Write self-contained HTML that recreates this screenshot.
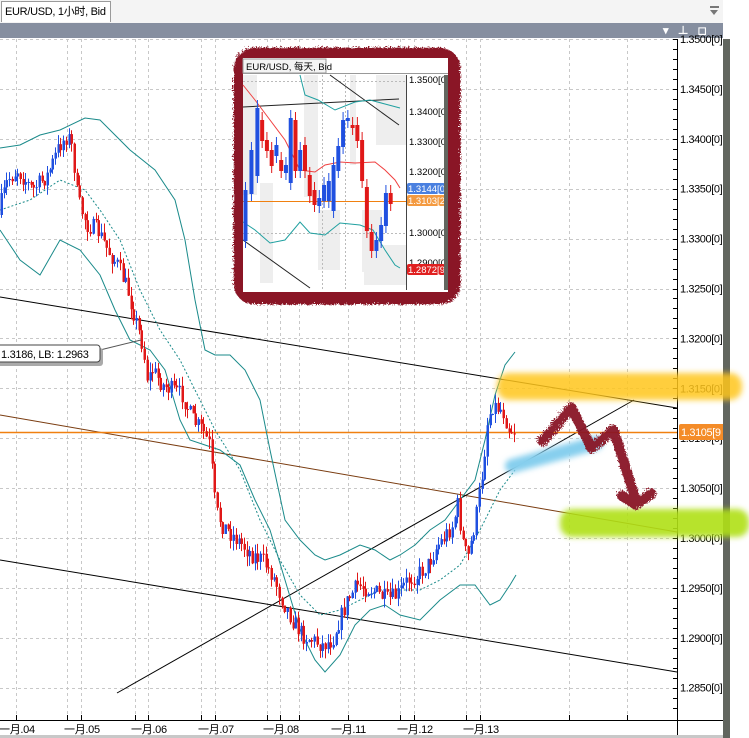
<!DOCTYPE html>
<html><head><meta charset="utf-8"><style>
body{margin:0;width:749px;height:738px;overflow:hidden;background:#fff;font-family:"Liberation Sans","Noto Sans CJK SC",sans-serif;position:relative}
#top{position:absolute;left:0;top:0;width:723px;height:23px;background:#f4f4f4;border-bottom:1px solid #a0a0a0}
#tab{position:absolute;left:1px;top:1px;width:110px;height:21px;background:#fff;border:1px solid #9a9a9a;border-bottom:none;font-size:11px;line-height:21px;padding-left:3px;box-sizing:border-box;letter-spacing:-0.3px}
#title{position:absolute;left:0;top:23px;width:723px;height:15px;background:#868fa0}
#frame{position:absolute;left:723px;top:0;width:7px;height:738px;background:linear-gradient(90deg,#b8b4a8,#6c7068 40%,#5a5e58 70%,#a9a9a0)}
svg{position:absolute;left:0;top:0}
</style></head><body>
<div id="top"><div id="tab">EUR/USD, 1小时, Bid</div>
<div style="position:absolute;left:710px;top:6px;width:9px;height:2px;background:#777"></div>
<div style="position:absolute;left:710px;top:10px;width:0;height:0;border-left:4.5px solid transparent;border-right:4.5px solid transparent;border-top:5px solid #777"></div></div>
<div id="title"><span style="position:absolute;left:663px;top:-1px;color:#fff;font-size:11px;font-weight:bold;letter-spacing:3px">▾ ⊥ ◻ ✕</span></div>
<div id="frame"></div>
<svg width="749" height="738" viewBox="0 0 749 738" style="top:0">
<defs>
<filter id="blur" x="-20%" y="-50%" width="140%" height="200%"><feGaussianBlur stdDeviation="3"/></filter>
<filter id="rough"><feTurbulence baseFrequency="0.5" numOctaves="2" result="t"/><feDisplacementMap in="SourceGraphic" in2="t" scale="6"/></filter>
<clipPath id="cc"><rect x="0" y="39" width="677" height="681"/></clipPath>
</defs>
<g id="grid" stroke="#c8c8c8" stroke-dasharray="3,3" stroke-width="1"></g>
<g id="lines" clip-path="url(#cc)"></g>
<g id="candles" clip-path="url(#cc)"></g>
<g id="axis"></g>
</svg>
<script>
const NS="http://www.w3.org/2000/svg";
function el(p,t,a){const e=document.createElementNS(NS,t);for(const k in a)e.setAttribute(k,a[k]);p.appendChild(e);return e}
const svg=document.querySelector('svg');
const grid=document.getElementById('grid'),lines=document.getElementById('lines'),cg=document.getElementById('candles'),ax=document.getElementById('axis');
const vx=[16,67,81,135,148,201,215,267,280,299,348,400,414,466,480,569,627];
vx.forEach(x=>el(grid,'line',{x1:x+.5,y1:39,x2:x+.5,y2:720}));
for(let k=0;k<14;k++){const y=Math.round(39+49.9*k)+.5;el(grid,'line',{x1:0,y1:y,x2:677,y2:y});}
el(ax,'rect',{x:0,y:720,width:723,height:18,fill:'#fff'});
el(ax,'line',{x1:0,y1:720.5,x2:723,y2:720.5,stroke:'#000'});
el(ax,'line',{x1:677.5,y1:39,x2:677.5,y2:735,stroke:'#000'});
el(ax,'rect',{x:0,y:735,width:723,height:3,fill:'#c8c8c8'});
vx.forEach(x=>el(ax,'line',{x1:x+.5,y1:715,x2:x+.5,y2:720,stroke:'#000'}));
const dl=[[16,'.04'],[81,'.05'],[148,'.06'],[215,'.07'],[280,'.08'],[348,'.11'],[414,'.12'],[480,'.13']];
dl.forEach(([x,s])=>{const t=el(ax,'text',{x:x-17,y:733,'font-size':'11',fill:'#000','letter-spacing':'-0.3'});t.textContent='一月'+s;});
for(let k=0;k<68;k++){const y=Math.round(39+9.98*k)+.5;el(ax,'line',{x1:673,y1:y,x2:677,y2:y,stroke:'#000'});}
const pl=['1.3500','1.3450','1.3400','1.3350','1.3300','1.3250','1.3200','1.3150','1.3100','1.3050','1.3000','1.2950','1.2900','1.2850'];
pl.forEach((s,k)=>{const y=39+49.9*k;const t=el(ax,'text',{x:680,y:y+4,'font-size':'11',fill:'#000','letter-spacing':'-0.4'});t.textContent=s+'[0]';});
el(ax,'rect',{x:723,y:0,width:26,height:738,fill:'#fff'});
function poly(pts,a){el(lines,'polyline',Object.assign({points:pts.map(p=>p.join(',')).join(' '),fill:'none'},a));}
poly([[0,297],[677,408]],{stroke:'#000','stroke-width':1});
poly([[0,560],[677,672]],{stroke:'#000','stroke-width':1});
poly([[0,415],[677,532]],{stroke:'#7a3c10','stroke-width':1});
poly([[117,693],[634,400]],{stroke:'#000','stroke-width':1});
el(lines,'line',{x1:0,y1:432.5,x2:677,y2:432.5,stroke:'#f08010','stroke-width':1.5});
const up=[[0,148],[20,145],[40,135],[60,130],[85,118],[100,120],[110,130],[130,150],[155,170],[175,200],[185,240],[195,300],[205,350],[215,355],[230,355],[245,370],[260,400],[270,450],[285,520],[300,540],[315,555],[325,560],[340,555],[360,545],[375,550],[390,560],[400,555],[415,545],[430,530],[445,520],[460,500],[475,480],[485,440],[495,395],[505,365],[515,352]];
const lo=[[0,230],[20,260],[40,275],[60,240],[80,250],[100,275],[115,310],[130,340],[150,350],[165,370],[180,420],[190,440],[205,445],[220,450],[240,465],[255,500],[270,530],[285,580],[300,630],[315,660],[325,672],[340,655],[355,625],[370,610],[385,605],[400,615],[420,620],[440,600],[460,585],[475,585],[490,605],[500,600],[510,585],[516,575]];
const mid=[[0,210],[30,200],[60,180],[85,190],[100,210],[120,240],[140,290],[160,330],[180,360],[200,400],[215,430],[240,470],[260,520],[280,560],[300,595],[320,615],[340,610],[360,600],[380,590],[400,590],[420,590],[440,580],[460,565],[480,530],[500,490],[515,470]];
poly(up,{stroke:'#1a8a8a'});poly(lo,{stroke:'#1a8a8a'});poly(mid,{stroke:'#1a8a8a','stroke-dasharray':'2,2'});
const path=[[0,215],[10,180],[20,170],[35,190],[50,175],[62,145],[70,135],[75,150],[80,200],[90,225],[100,230],[110,250],[120,265],[130,290],[138,320],[145,345],[150,380],[155,370],[165,385],[175,390],[185,395],[195,420],[205,430],[212,445],[218,510],[225,525],[235,535],[245,545],[255,555],[265,560],[275,575],[285,600],[295,620],[305,635],[315,640],[325,645],[335,640],[340,625],[350,600],[360,585],[375,590],[390,600],[400,595],[410,580],[420,575],[430,565],[440,545],[445,540],[455,525],[460,505],[465,540],[470,560],[478,520],[485,470],[490,420],[495,405],[505,410],[512,430]];
function yAt(x){for(let i=1;i<path.length;i++){if(x<=path[i][0]){const a=path[i-1],b=path[i];return a[1]+(b[1]-a[1])*(x-a[0])/(b[0]-a[0]);}}return 430;}
let seed=7;function rnd(){seed=(seed*16807)%2147483647;return seed/2147483647;}
let prev=yAt(0);
for(let x=1;x<=514;x+=2.7){const c=yAt(x+2.7)+(rnd()-.5)*18;const o=prev;const hi=Math.min(o,c)-rnd()*10;const lw=Math.max(o,c)+rnd()*10;
const bull=c<o;const col=bull?'#2050e0':'#e01818';const cx=Math.round(x)+.5;
el(cg,'line',{x1:cx,y1:hi,x2:cx,y2:lw,stroke:col});
el(cg,'rect',{x:Math.round(x)-0.5,y:Math.min(o,c),width:2.5,height:Math.max(1,Math.abs(c-o)),fill:col});prev=c;}
const lg=document.createElementNS(NS,'g');svg.appendChild(lg);
el(lg,'line',{x1:100,y1:350,x2:141,y2:340,stroke:'#555'});
el(lg,'rect',{x:-6,y:346,width:107,height:18,rx:3,fill:'#aaa',transform:'translate(2,2)'});
el(lg,'rect',{x:-6,y:345,width:106,height:17,rx:3,fill:'#fff',stroke:'#444'});
const lt=el(lg,'text',{x:1,y:358,'font-size':'11',fill:'#000','letter-spacing':'-0.3'});lt.textContent='1.3186, LB: 1.2963';
el(lg,'rect',{x:679,y:424,width:48,height:16,rx:2,fill:'#f48c28'});
const ot=el(lg,'text',{x:681,y:436,'font-size':'11',fill:'#fff','letter-spacing':'-0.4'});ot.textContent='1.3105[9';
el(lg,'rect',{x:723,y:39,width:7,height:699,fill:'#62665f'});
const hg=document.createElementNS(NS,'g');svg.appendChild(hg);
el(hg,'rect',{x:497,y:373,width:245,height:27,rx:12,fill:'#ffc61a',opacity:.85,filter:'url(#blur)'});
el(hg,'rect',{x:560,y:509,width:189,height:28,rx:12,fill:'#b0e018',opacity:.9,filter:'url(#blur)'});
el(hg,'path',{d:'M512 466 L596 443',stroke:'#86cfee','stroke-width':14,'stroke-linecap':'round',fill:'none',filter:'url(#blur)'});
el(hg,'path',{d:'M541 440 L570 406 L590 447 L612 428 L634 498 M620 494 L634 503 L650 492',stroke:'#8a1628','stroke-width':10,'stroke-linecap':'round','stroke-linejoin':'round',fill:'none',opacity:.95,filter:'url(#rough)'});
const ig=document.createElementNS(NS,'g');svg.appendChild(ig);
el(ig,'rect',{x:239,y:53,width:213,height:243,rx:14,fill:'none',stroke:'#8a1628','stroke-width':14,filter:'url(#rough)'});
el(ig,'rect',{x:243,y:58,width:205,height:234,fill:'#fff'});
el(ig,'rect',{x:243,y:73,width:205,height:1,fill:'#999'});
el(ig,'rect',{x:243,y:59,width:83,height:14,fill:'#f4f4f4',stroke:'#999'});
const it=el(ig,'text',{x:246,y:70,'font-size':'9.5',fill:'#000'});it.textContent='EUR/USD, 每天, Bid';
[[243,75,14,120],[260,183,13,100],[304,75,14,122],[318,210,22,60],[350,75,6,90],[362,210,20,62],[376,75,30,70],[364,245,42,40]].forEach(r=>el(ig,'rect',{x:r[0],y:r[1],width:r[2],height:r[3],fill:'#eeeeee'}));
[322,345].forEach(x=>el(ig,'line',{x1:x+.5,y1:75,x2:x+.5,y2:290,stroke:'#bbb','stroke-dasharray':'2,2'}));
[81,233].forEach(y=>el(ig,'line',{x1:243,y1:y+.5,x2:406,y2:y+.5,stroke:'#bbb','stroke-dasharray':'2,2'}));
el(ig,'line',{x1:406.5,y1:75,x2:406.5,y2:290,stroke:'#444'});
el(ig,'line',{x1:243,y1:107,x2:399,y2:99,stroke:'#222'});
el(ig,'line',{x1:330,y1:75,x2:399,y2:125,stroke:'#222'});
el(ig,'line',{x1:243,y1:240,x2:310,y2:288,stroke:'#222'});
el(ig,'line',{x1:243,y1:201.5,x2:406,y2:201.5,stroke:'#f08010'});
el(ig,'polyline',{points:'243,85 255,100 270,120 285,140 300,170 315,172 325,165 340,162 355,163 375,162 385,170 395,180 400,188',fill:'none',stroke:'#f04040'});
el(ig,'polyline',{points:'243,222 255,230 270,243 285,240 300,222 310,233 325,235 340,223 360,225 373,230 385,250 395,265 400,268',fill:'none',stroke:'#20a0a0'});
el(ig,'polyline',{points:'300,75 305,95 318,100 335,110 355,102 370,100 385,104 400,108',fill:'none',stroke:'#20a0a0'});
const ic=[[245,240,190,1],[250,193,150,1],[255,175,108,1],[259,120,140,0],[263,140,150,0],[267,150,165,0],[271,155,145,1],[275,160,170,0],[279,165,172,1],[283,182,118,1],[287,120,170,0],[291,170,150,1],[295,145,170,0],[299,175,195,0],[303,190,204,0],[307,205,198,1],[311,200,185,1],[315,200,181,1],[319,210,165,1],[323,170,146,1],[327,146,120,1],[331,120,118,1],[335,125,127,0],[339,125,140,0],[343,140,180,0],[347,187,230,0],[351,232,250,0],[355,250,240,1],[359,240,225,1],[363,225,193,1],[367,193,203,0]];
ic.forEach(([x0,o,c,b])=>{const x=245+(x0-245)*1.19;const col=b?'#2050e0':'#e01818';el(ig,'line',{x1:x+.5,y1:Math.min(o,c)-8,x2:x+.5,y2:Math.max(o,c)+8,stroke:col});el(ig,'rect',{x:x-1.5,y:Math.min(o,c),width:4,height:Math.abs(c-o)+1,fill:col});});
[['1.3500',80],['1.3400',112],['1.3300',142],['1.3200',172],['1.3000',233],['1.2900',263]].forEach(([s,y])=>{const t=el(ig,'text',{x:409,y:y+3,'font-size':'9.5',fill:'#000'});t.textContent=s+'[0]';});
el(ig,'rect',{x:407,y:183,width:38,height:11,rx:2,fill:'#4a80e0'});
el(ig,'rect',{x:407,y:195,width:38,height:11,rx:2,fill:'#f49a40'});
el(ig,'rect',{x:407,y:264,width:38,height:11,rx:2,fill:'#e02020'});
[['1.3144[0',192],['1.3103[2',204],['1.2872[9',273]].forEach(([s,y])=>{const t=el(ig,'text',{x:408,y:y,'font-size':'9.5',fill:'#fff'});t.textContent=s;});
el(ig,'rect',{x:444,y:75,width:4,height:215,fill:'#62665f'});
</script>
</body></html>
